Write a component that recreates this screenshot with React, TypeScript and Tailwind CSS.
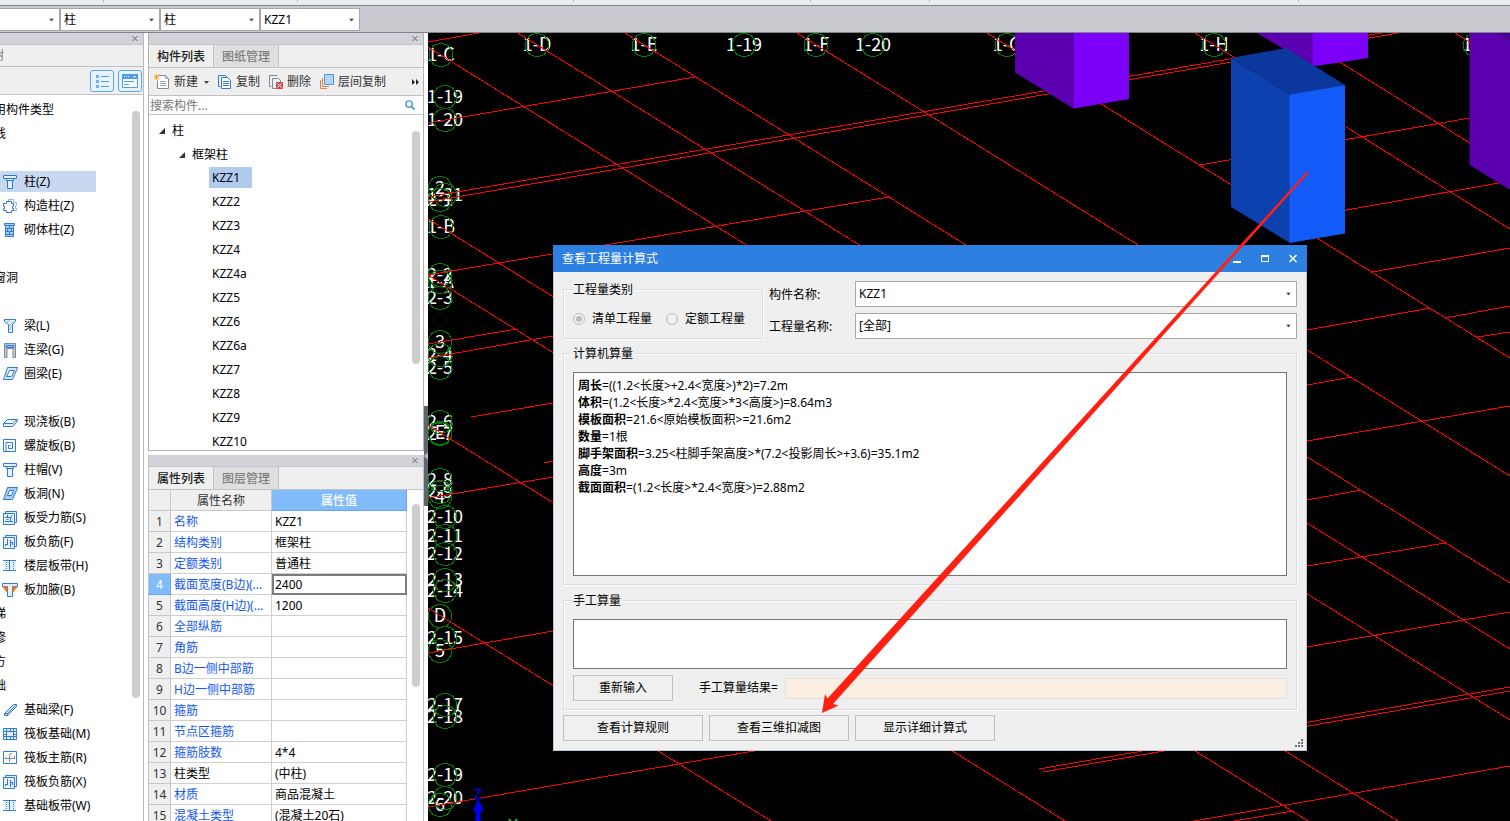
import React from 'react';

const FONT = "font-['Noto_Sans','Noto_Sans_CJK_SC',sans-serif]";

type IconProps = { children: React.ReactNode; className?: string };

const Icon = ({ children, className = '' }: IconProps) => (
  <svg
    viewBox="0 0 16 16"
    className={`h-4 w-4 shrink-0 ${className}`}
    fill="none"
    stroke="#2f7bd6"
    aria-hidden="true"
  >
    {children}
  </svg>
);

const rebarFrame = <path d="M1.5 3.5h11v11h-11zM3.500 3.500v-2h11v11h-2" fill="#e3effc" />;

const icons: Record<string, React.ReactNode> = {
  column: <path d="M1.5 1.5h13v3h-13zM4.5 4.5v2h7v-2M5.5 6.5v8h5v-8" fill="#e3effc" />,
  structColumn: (
    <>
      <path d="M6.500 3V1.500h5v3h3v3h-1v3h1v2h-3" stroke="#8db8ea" />
      <path d="M4.5 3.5h5v2h2v3h-1v2h1v2h-2v2h-5v-2h-3v-2h1v-2h-1v-3h3z" fill="#fff" />
    </>
  ),
  brickColumn: (
    <>
      <path d="M2.5 1.5h10v2h-10zM3.5 3.5h8v11h-8z" fill="#a9cdf5" />
      <path d="M4 6.500h7M4 9.500h7M4 12.500h7M7.500 4v2M5.500 7v2M9.500 7v2M7.500 10v2" />
    </>
  ),
  beam: (
    <>
      <path d="M2.5 1.5h11v2l-3 3v8h-4v-8l-4-3z" fill="#e3effc" />
      <path d="M4 5l4-3M7 8l5-5M7 12l3-4" stroke="#8db8ea" />
    </>
  ),
  linkBeam: (
    <>
      <path d="M2.500 15.500V1.500h11v14h-2.500V6.500H5v9z" fill="#c4c9ce" stroke="#7e8a96" />
      <path d="M4 3.500h8v2H4z" fill="#8dbcf0" />
    </>
  ),
  ringBeam: (
    <path
      d="M5.500 1.500h10l-1 3-4 9h-9l1-3zM7.500 4.500h5l-3 6h-5z"
      fill="#d3e6fb"
      fillRule="evenodd"
    />
  ),
  slab: <path d="M1.500 9.500l4-4h10l-1 3-4 4h-9zM1.500 9.500h9.500l4-4" fill="#e3effc" />,
  spiral: <path d="M4 13.500h9.500v-12H1.500v12H4v-9h6.500v6h-4v-3h2" />,
  opening: (
    <>
      <path d="M5.500 1.500h10l-1 3-4 9h-9l1-3z" fill="#a9cdf5" />
      <path d="M7.500 4.500h4l-2 5h-4z" fill="#fff" />
    </>
  ),
  rebar: (
    <>
      {rebarFrame}
      <path d="M3 7.500h6l1-2M3 11.500h8M5.500 5v2M8.500 7v5M4.500 9.500h2" />
    </>
  ),
  negRebar: (
    <>
      {rebarFrame}
      <path d="M5.500 5v6M8.500 6v7M3 10.500h3M8 8.500h3M3.500 10v2M10.500 8v3" />
    </>
  ),
  strip: (
    <>
      <path d="M2 3h12v10H2z" fill="#e3effc" stroke="none" />
      <path d="M1 2.500h13M1 12.500h13M7.500 2v11" />
      <path d="M4.500 4v9M11.500 4v9" strokeDasharray="1 1" />
    </>
  ),
  haunch: (
    <>
      <path d="M.500 1.500h15v3h-5v10h-5v-10h-5z" fill="#e3effc" />
      <path d="M1 5h4v5zM15 5h-4v5z" fill="#f07818" stroke="#f07818" />
    </>
  ),
  foundBeam: <path d="M2.500 11.500l9-9h3v2l-9 9h-3zM2.500 11.500h3v2M5.500 11.500l8-8" fill="#d3e6fb" />,
  raft: (
    <>
      <path d="M1.500 2.500h13v11h-13z" fill="#e3effc" />
      <path d="M4.500 2v12M11.500 2v12M2 5.500h12M2 10.500h12M8.500 2v3M8.500 11v3M2 8.500h2M12 8.500h2" />
    </>
  ),
  raftMain: (
    <>
      <path d="M1.500 1.500h13v12h-13z" fill="#fff" />
      <path d="M3 8.500h10M7.500 12V5.500q0-2 2.500-2M3.500 7v2M12.500 6v2.500" stroke="#7e8a96" />
    </>
  ),
};

// Rows of the module tree, one entry per 24px line. Entries without an icon are group headings.
const moduleRows: { text: string; icon?: string }[] = [
  { text: '用构件类型' },
  { text: '线' },
  { text: '' },
  { text: '柱(Z)', icon: 'column' },
  { text: '构造柱(Z)', icon: 'structColumn' },
  { text: '砌体柱(Z)', icon: 'brickColumn' },
  { text: '' },
  { text: '窗洞' },
  { text: '' },
  { text: '梁(L)', icon: 'beam' },
  { text: '连梁(G)', icon: 'linkBeam' },
  { text: '圈梁(E)', icon: 'ringBeam' },
  { text: '' },
  { text: '现浇板(B)', icon: 'slab' },
  { text: '螺旋板(B)', icon: 'spiral' },
  { text: '柱帽(V)', icon: 'column' },
  { text: '板洞(N)', icon: 'opening' },
  { text: '板受力筋(S)', icon: 'rebar' },
  { text: '板负筋(F)', icon: 'negRebar' },
  { text: '楼层板带(H)', icon: 'strip' },
  { text: '板加腋(B)', icon: 'haunch' },
  { text: '梯' },
  { text: '修' },
  { text: '方' },
  { text: '础' },
  { text: '基础梁(F)', icon: 'foundBeam' },
  { text: '筏板基础(M)', icon: 'raft' },
  { text: '筏板主筋(R)', icon: 'raftMain' },
  { text: '筏板负筋(X)', icon: 'negRebar' },
  { text: '基础板带(W)', icon: 'strip' },
];

const components = ['KZZ1', 'KZZ2', 'KZZ3', 'KZZ4', 'KZZ4a', 'KZZ5', 'KZZ6', 'KZZ6a', 'KZZ7', 'KZZ8', 'KZZ9', 'KZZ10'];

const properties: [string, string][] = [
  ['名称', 'KZZ1'],
  ['结构类别', '框架柱'],
  ['定额类别', '普通柱'],
  ['截面宽度(B边)(...', '2400'],
  ['截面高度(H边)(...', '1200'],
  ['全部纵筋', ''],
  ['角筋', ''],
  ['B边一侧中部筋', ''],
  ['H边一侧中部筋', ''],
  ['箍筋', ''],
  ['节点区箍筋', ''],
  ['箍筋肢数', '4*4'],
  ['柱类型', '(中柱)'],
  ['材质', '商品混凝土'],
  ['混凝土类型', '(混凝土20石)'],
];

const formulas: [string, string][] = [
  ['周长', '=((1.2<长度>+2.4<宽度>)*2)=7.2m'],
  ['体积', '=(1.2<长度>*2.4<宽度>*3<高度>)=8.64m3'],
  ['模板面积', '=21.6<原始模板面积>=21.6m2'],
  ['数量', '=1根'],
  ['脚手架面积', '=3.25<柱脚手架高度>*(7.2<投影周长>+3.6)=35.1m2'],
  ['高度', '=3m'],
  ['截面面积', '=(1.2<长度>*2.4<宽度>)=2.88m2'],
];

// Grid axes of the model view: x1, y1, x2, y2
const axes = [
  [428, 47, 1510, 720],
  [518, 33, 1510, 649],
  [625, 33, 1510, 583],
  [797, 33, 1510, 476],
  [987, 33, 1510, 358],
  [1195, 33, 1510, 229],
  [1293, 33, 1510, 168],
  [1455, 33, 1510, 67],
  [428, 219, 1398, 821],
  [428, 275, 1308, 821],
  [428, 425, 1065, 821],
  [428, 608, 771, 821],
  [428, 42, 479, 33],
  [428, 123, 695, 77],
  [428, 197, 1381, 33],
  [428, 202, 1398, 33],
  [428, 275, 889, 197],
  [428, 344, 517, 329],
  [428, 358, 553, 336],
  [471, 417, 553, 403],
  [544, 463, 553, 461],
  [428, 498, 553, 477],
  [428, 653, 553, 631],
  [428, 807, 754, 751],
  [1200, 165, 1470, 118],
  [1307, 217, 1499, 183],
  [1372, 272, 1510, 248],
  [1307, 330, 1431, 308],
  [1445, 318, 1510, 306],
  [1477, 337, 1510, 332],
  [1307, 385, 1352, 377],
  [1307, 441, 1510, 406],
  [1307, 500, 1361, 490],
  [1307, 566, 1445, 543],
  [1307, 647, 1510, 612],
  [1039, 769, 1510, 687],
  [1043, 772, 1510, 691],
  [1194, 821, 1510, 766],
  [1234, 821, 1293, 811],
];

const marks: [string, number, number][] = [
  ['1-C', 441, 55],
  ['1-D', 537, 45],
  ['1-E', 644, 45],
  ['1-19', 744, 45],
  ['1-F', 816, 45],
  ['1-20', 873, 45],
  ['1-G', 1007, 45],
  ['1-H', 1214, 45],
  ['1-J', 1475, 45],
  ['1-19', 445, 97],
  ['1-20', 445, 120],
  ['2', 440, 188],
  ['1-21', 445, 195],
  ['2-1', 440, 200],
  ['1-B', 441, 227],
  ['2-2', 440, 275],
  ['1-A', 440, 282],
  ['2-3', 440, 298],
  ['3', 440, 342],
  ['2-4', 440, 355],
  ['2-5', 440, 368],
  ['2-6', 440, 422],
  ['E', 440, 433],
  ['2-7', 440, 434],
  ['2-8', 440, 480],
  ['2-9', 440, 492],
  ['4', 440, 497],
  ['2-10', 445, 517],
  ['2-11', 445, 536],
  ['2-12', 445, 554],
  ['2-13', 445, 580],
  ['2-14', 445, 591],
  ['D', 440, 616],
  ['2-15', 445, 638],
  ['5', 440, 651],
  ['2-17', 445, 705],
  ['2-18', 445, 717],
  ['2-19', 445, 775],
  ['2-20', 445, 798],
  ['6', 440, 805],
];

const bubble = (cx: number, cy: number) =>
  Array.from({ length: 10 }, (_, i) => {
    const a = (i * Math.PI) / 5 - Math.PI / 2;
    return `${cx + 12 * Math.cos(a)},${cy + 12 * Math.sin(a)}`;
  }).join(' ');

function Scene() {
  return (
    <svg
      viewBox="428 33 1082 788"
      preserveAspectRatio="xMinYMin slice"
      className="absolute inset-0 h-full w-full"
      role="img"
      aria-label="三维模型"
    >
      <g fill="#fff" fontSize="18" textAnchor="middle" className="font-['Noto_Sans_CJK_SC',sans-serif]">
        {marks.map(([text, x, y]) => (
          <text key={`${text}-${y}-${x}`} x={x} y={y + 6}>
            {text}
          </text>
        ))}
      </g>
      <g fill="none" stroke="#008000" shapeRendering="crispEdges">
        {marks.map(([text, x, y]) => (
          <polygon key={`${text}-${y}-${x}`} points={bubble(x, y)} />
        ))}
      </g>
      <g stroke="#f00" shapeRendering="crispEdges">
        {axes.map(([x1, y1, x2, y2]) => (
          <line key={`${x1}-${y1}-${y2}`} x1={x1} y1={y1} x2={x2} y2={y2} />
        ))}
      </g>
      <path d="M1015 33v39.500L1074 109V33z" fill="#5a00b0" />
      <path d="M1074 33h55v66l-55 9.500z" fill="#7c00f8" />
      <path d="M1257 33l56 33.500V33z" fill="#5a00b0" />
      <path d="M1312.500 33H1368v25l-55.500 8.500z" fill="#7c00f8" />
      <path d="M1469.500 33v132l41 25V33z" fill="#5a00b0" />
      <path d="M1498 33h13v9z" fill="#4a0094" />
      <path d="M1231 58l55-10 59 37-55 9.500z" fill="#0c389e" />
      <path d="M1231 58l59 36.500V243l-59-36z" fill="#0e41b0" />
      <path d="M1289.500 94.500L1345 85v148.500l-55.500 9.500z" fill="#135bf8" />
      <text x="478" y="799" fontSize="15" textAnchor="middle" fill="#00f">
        Z
      </text>
      <path d="M478 799l6 12h-3.500v10h-5v-10H473z" fill="#00f" />
      <text x="513" y="831" fontSize="16" textAnchor="middle" fill="#0f0">
        Y
      </text>
    </svg>
  );
}

const Caret = ({ className = '' }: { className?: string }) => (
  <svg viewBox="0 0 5 3" className={`h-[3px] w-[5px] shrink-0 ${className}`} aria-hidden="true">
    <path d="M0 0h5L2.500 3z" fill="#444" />
  </svg>
);

type SelectProps = { value: string; label?: string; id?: string; className?: string };

function Select({ value, label, id, className = '' }: SelectProps) {
  return (
    <div className={`relative ${className}`}>
      <select
        id={id}
        aria-label={label}
        className="h-full w-full appearance-none border border-[#a8a8a8] bg-white pl-[3px] text-black"
      >
        <option>{value}</option>
      </select>
      <Caret className="pointer-events-none absolute top-1/2 right-1.5 -translate-y-1/2" />
    </div>
  );
}

const PanelStrip = () => (
  <div className="flex h-3 shrink-0 items-center justify-end border-b border-[#c3c5cc] bg-[#d2d3d9] pr-[5px]">
    <button type="button" aria-label="关闭">
      <svg viewBox="0 0 6 5" className="h-[5px] w-[6px]" stroke="#6a6a6a" aria-hidden="true">
        <path d="M.500 0l5 5M5.500 0l-5 5" />
      </svg>
    </button>
  </div>
);

function Tabs({ items }: { items: string[] }) {
  return (
    <div className="flex h-[23px] shrink-0 border-b border-[#c0c2c9] bg-[#efefef]" role="tablist">
      {items.map((item, i) => (
        <button
          key={item}
          type="button"
          role="tab"
          aria-selected={i === 0}
          className={`h-[22px] border-r border-[#c0c2c9] px-2 pt-0.5 font-medium ${
            i === 0 ? 'text-[#222]' : 'bg-[#dfdfdf] text-[#808080]'
          }`}
        >
          {item}
        </button>
      ))}
    </div>
  );
}

function ModulePanel() {
  return (
    <aside className="flex w-36 shrink-0 flex-col overflow-hidden border-r border-[#b8babf] bg-white">
      <PanelStrip />
      <div className="flex h-[22px] shrink-0 items-center border-b border-[#c0c2c9] bg-[#efefef] text-[#777]">
        <span className="-ml-2">树</span>
      </div>
      <div className="flex h-7 shrink-0 items-center justify-end gap-1 border-b border-[#c0c2c9] bg-[#efefef] pr-px">
        <button
          type="button"
          aria-label="列表"
          className="flex h-[22px] w-6 items-center justify-center rounded-[3px] border border-[#5aa5f2] bg-[#eaf4ff]"
        >
          <Icon>
            <path d="M2.500 2.500h2v2h-2zM2.500 7.500h2v2h-2zM2.500 12.500h2v2h-2z" stroke="#4a9cf0" />
            <path d="M7 3.500h8M7 8.500h8M7 13.500h8" stroke="#4a9cf0" />
          </Icon>
        </button>
        <button
          type="button"
          aria-label="卡片"
          className="flex h-[22px] w-6 items-center justify-center rounded-[3px] border border-[#5aa5f2] bg-[#eaf4ff]"
        >
          <Icon>
            <path d="M.500 1.500h15v13h-15z" fill="#fff" stroke="#4a9cf0" />
            <path d="M0 1h16v5H0z" fill="#4a9cf0" stroke="none" />
            <path d="M2 3.500h6" stroke="#fff" strokeDasharray="1 1" />
            <path d="M11 3h3l-1.500 2z" fill="#fff" stroke="none" />
            <path d="M2 8.500h10M2 11.500h5" stroke="#4a9cf0" />
          </Icon>
        </button>
      </div>
      <div className="relative min-h-0 flex-1 overflow-hidden pt-[3px]">
        <ul>
          {moduleRows.map(({ text, icon }, i) => (
            <li key={i} className="flex h-6 items-start pt-px leading-[21px] whitespace-nowrap">
              {icon ? (
                <button
                  type="button"
                  className={`flex h-[21px] items-center gap-1.5 pl-0.5 ${
                    i === 3 ? 'w-24 bg-[#c8d8f0]' : ''
                  }`}
                >
                  <Icon>{icons[icon]}</Icon>
                  {text}
                </button>
              ) : (
                <span className="-ml-1.5">{text}</span>
              )}
            </li>
          ))}
        </ul>
        <div className="absolute top-4 right-[3px] h-[587px] w-2 rounded-full bg-[#cdcdcd]" />
      </div>
    </aside>
  );
}

const Toolbar = () => (
  <div className="flex h-7 shrink-0 items-center border-b border-[#c0c2c9] bg-[#efefef] pt-px pr-[3px] pl-[5px] text-[#333]">
    <button type="button" className="flex items-center gap-1">
      <Icon>
        <path d="M5 1.500h6.500l3 3v10h-11v-8" fill="#fff" stroke="#7e8a96" />
        <path d="M11.500 1.500v3h3M6 7.500h6M6 9.500h6M6 11.500h6" stroke="#9aa4ae" />
        <path d="M0 .500l5 5M5 .500l-5 5M2.500 0v6M0 3h5" stroke="#f5a020" />
      </Icon>
      新建
      <Caret className="ml-0.5" />
    </button>
    <button type="button" className="ml-2 flex items-center gap-[3px]">
      <Icon>
        <path d="M3.500 12.500h-2v-11h7l2 2" />
        <path d="M4.500 3.500h6l3 3v8h-9z" fill="#fff" />
        <path d="M6 7.500h6M6 9.500h6M6 11.500h6" />
      </Icon>
      复制
    </button>
    <button type="button" className="ml-2 flex items-center gap-[3px]">
      <Icon>
        <path d="M3.500 12.500h-2v-11h8M8 14.500H4.500v-10h6l2 2V8" stroke="#7e8a96" />
        <path d="M8 8h7v7H8z" fill="#d84a4a" stroke="none" />
        <path d="M9.500 9.500l4 4M13.500 9.500l-4 4" stroke="#fff" />
      </Icon>
      删除
    </button>
    <button type="button" className="ml-2 flex items-center gap-[3px]">
      <Icon>
        <path d="M1.500 6v8.500H8M3.500 4v8.500H10" stroke="#f08030" />
        <path d="M5.500.500h9v10h-9z" fill="#b5d5fa" stroke="#4a94e8" />
      </Icon>
      层间复制
    </button>
    <button type="button" aria-label="更多" className="ml-auto">
      <svg viewBox="0 0 8 6" className="h-1.5 w-2" fill="#222" aria-hidden="true">
        <path d="M0 0l3 3-3 3zM4 0l3 3-3 3z" />
      </svg>
    </button>
  </div>
);

const Expander = () => (
  <svg viewBox="0 0 6 6" className="h-1.5 w-1.5" aria-hidden="true">
    <path d="M6 0v6H0z" fill="#333" />
  </svg>
);

function ComponentPanel() {
  return (
    <section className="flex h-[418px] shrink-0 flex-col border border-t-0 border-[#b0b2b8] bg-white">
      <PanelStrip />
      <Tabs items={['构件列表', '图纸管理']} />
      <Toolbar />
      <div className="flex h-[19px] shrink-0 items-center border-b border-[#c0c2c9] pr-2 pl-px">
        <input
          aria-label="搜索构件"
          placeholder="搜索构件..."
          className="min-w-0 flex-1 pt-px outline-none placeholder:text-[#777]"
        />
        <svg viewBox="0 0 11 11" className="h-[10px] w-[10px]" fill="none" stroke="#3f97d0" aria-hidden="true">
          <circle cx="4.500" cy="4.500" r="3.500" strokeWidth="1.500" />
          <path d="M7 7l3.500 3.500" strokeWidth="2" />
        </svg>
      </div>
      <div className="relative min-h-0 flex-1 overflow-hidden pt-[3px]">
        <div className="flex h-6 items-center gap-[7px] pt-px pl-[10px]">
          <Expander />柱
        </div>
        <div className="flex h-6 items-center gap-[7px] pt-px pl-[30px]">
          <Expander />
          框架柱
        </div>
        <ul className="pl-[60px]">
          {components.map((name, i) => (
            <li key={name} className="flex h-6 items-start pt-px">
              <span className={`h-[21px] px-[3px] leading-[21px] ${i === 0 ? 'w-[43px] bg-[#b0cbee]' : ''}`}>
                {name}
              </span>
            </li>
          ))}
        </ul>
        <div className="absolute top-4 right-[3px] h-[233px] w-2 rounded-full bg-[#cdcdcd]" />
      </div>
    </section>
  );
}

function PropertyPanel() {
  return (
    <section className="mt-1 flex min-h-0 flex-1 flex-col border border-t-0 border-b-0 border-[#c0c2c9] bg-white">
      <PanelStrip />
      <Tabs items={['属性列表', '图层管理']} />
      <div className="relative min-h-0 flex-1 overflow-hidden">
        <table className="w-[258px] table-fixed border-separate border-spacing-0">
          <colgroup>
            <col className="w-[22px]" />
            <col className="w-[101px]" />
            <col />
          </colgroup>
          <thead>
            <tr className="h-[21px] bg-[#efefef] text-[#333]">
              <th className="border-r border-b border-[#c8c8c8] p-0" aria-label="序号" />
              <th className="border-r border-b border-[#c8c8c8] p-0 pt-0.5 font-normal">属性名称</th>
              <th className="border-r border-b border-[#62a8ee] bg-[#82bbfa] p-0 pt-0.5 font-medium text-white">
                属性值
              </th>
            </tr>
          </thead>
          <tbody>
            {properties.map(([name, value], i) => (
              <tr key={name} className="h-[21px]">
                <td
                  className={`border-r border-b p-0 pt-0.5 text-center ${
                    i === 3
                      ? 'border-[#62a8ee] bg-[#82bbfa] text-white'
                      : 'border-[#c8c8c8] bg-[#efefef] text-[#333]'
                  }`}
                >
                  {i + 1}
                </td>
                <td
                  className={`overflow-hidden border-r border-b border-[#d0d0d0] p-0 pt-0.5 pl-[3px] whitespace-nowrap ${
                    name === '柱类型' ? 'text-black' : 'text-[#1458f0]'
                  }`}
                >
                  {name}
                </td>
                <td
                  className={`border-r border-b border-[#d0d0d0] p-0 pt-0.5 pl-[3px] ${
                    i === 3 ? 'outline-2 -outline-offset-2 outline-[#7c7c7c]' : ''
                  }`}
                >
                  {value}
                </td>
              </tr>
            ))}
          </tbody>
        </table>
        <div className="absolute top-3.5 right-[3px] h-[183px] w-2 rounded-full bg-[#cdcdcd]" />
      </div>
    </section>
  );
}

const groupClass =
  'min-w-0 border border-[#dcdcdc] px-[9px] shadow-[1px_1px_0_#fff,inset_1px_1px_0_#fff]';
const legendClass = 'bg-[#efefef] pt-0.5 pr-0.5 leading-[14px]';
const buttonClass = 'border border-[#c0c0c0] bg-[#f0f0f0] h-[26px] text-black';

function QuantityDialog() {
  return (
    <div
      role="dialog"
      aria-label="查看工程量计算式"
      className="absolute top-[212px] left-[125px] flex w-[754px] flex-col bg-[#efefef] text-black"
    >
      <header className="flex h-[27px] items-center bg-[#2d80e2] px-[9px] text-white">
        <h1 className="flex-1">查看工程量计算式</h1>
        <div className="flex items-center gap-[19px]">
          <button type="button" aria-label="最小化">
            <svg viewBox="0 0 9 9" className="h-[9px] w-[9px]" aria-hidden="true">
              <path d="M0 7h8v2H0z" fill="#fff" />
            </svg>
          </button>
          <button type="button" aria-label="最大化">
            <svg viewBox="0 0 9 9" className="h-[9px] w-[9px]" aria-hidden="true">
              <path d="M0 1h8v7H0zM1 3v4h6V3z" fill="#fff" fillRule="evenodd" />
            </svg>
          </button>
          <button type="button" aria-label="关闭窗口">
            <svg viewBox="0 0 9 9" className="h-[9px] w-[9px]" stroke="#fff" strokeWidth="1.500" aria-hidden="true">
              <path d="M.500 1l7 7M7.500 1l-7 7" />
            </svg>
          </button>
        </div>
      </header>

      <div className="flex flex-col border border-t-0 border-[#b9c7d6] p-[9px]">
        <div className="flex gap-1.5">
          <fieldset className={`h-[58px] w-[200px] ${groupClass}`}>
            <legend className={legendClass}>工程量类别</legend>
            <div className="flex gap-3.5 pt-3.5 leading-4">
              {['清单工程量', '定额工程量'].map((name, i) => (
                <label key={name} className="flex items-center gap-[7px]">
                  <input
                    type="radio"
                    name="quantity"
                    defaultChecked={i === 0}
                    className="h-3 w-3 appearance-none rounded-full border border-[#bcbcbc] bg-[#f2f2f2] bg-clip-content p-0.5 checked:bg-[#bcbcbc]"
                  />
                  {name}
                </label>
              ))}
            </div>
          </fieldset>
          <div className="grid flex-1 grid-cols-[80px_1fr] items-center gap-x-1.5 gap-y-1.5">
            <label htmlFor="component-name" className="pt-0.5">
              构件名称:
            </label>
            <Select id="component-name" value="KZZ1" className="h-[26px]" />
            <label htmlFor="quantity-name" className="pt-0.5">
              工程量名称:
            </label>
            <Select id="quantity-name" value="[全部]" className="h-[26px]" />
          </div>
        </div>

        <fieldset className={`mt-1.5 pb-2 ${groupClass}`}>
          <legend className={legendClass}>计算机算量</legend>
          <div className="mt-[11px] h-[204px] border border-[#767676] bg-white p-1 leading-[17px]">
            {formulas.map(([name, text]) => (
              <p key={name}>
                <b>{name}</b>
                {text}
              </p>
            ))}
          </div>
        </fieldset>

        <fieldset className={`mt-[7px] pb-2 ${groupClass}`}>
          <legend className={legendClass}>手工算量</legend>
          <textarea
            aria-label="手工算量"
            className="mt-[11px] block h-[50px] w-full resize-none border border-[#767676] bg-white"
          />
          <div className="mt-1.5 flex items-center">
            <button type="button" className={`w-[100px] ${buttonClass}`}>
              重新输入
            </button>
            <label htmlFor="manual-result" className="ml-[26px]">
              手工算量结果=
            </label>
            <input
              id="manual-result"
              readOnly
              className="ml-[7px] h-[21px] min-w-0 flex-1 border border-[#e0e0e0] bg-[#faeee3]"
            />
          </div>
        </fieldset>

        <div className="mt-[5px] flex gap-1.5">
          {['查看计算规则', '查看三维扣减图', '显示详细计算式'].map((name) => (
            <button key={name} type="button" className={`w-[140px] ${buttonClass}`}>
              {name}
            </button>
          ))}
        </div>
      </div>
      <svg viewBox="0 0 8 8" className="absolute right-1 bottom-1 h-2 w-2" fill="#6e7378" aria-hidden="true">
        <path d="M6 0h2v2H6zM3 3h2v2H3zM6 3h2v2H6zM0 6h2v2H0zM3 6h2v2H3zM6 6h2v2H6z" />
      </svg>
    </div>
  );
}

export default function App() {
  return (
    <div className={`flex h-screen flex-col overflow-hidden bg-white text-xs text-black ${FONT}`}>
      <div className="flex h-[5px] shrink-0 bg-[#e8eded]">
        <div className="h-0.5 w-[104px] border-r border-[#b0b4b8]" />
        <div className="h-0.5 w-[194px] border-r border-[#b0b4b8]" />
        <div className="h-0.5 w-[276px] border-r border-[#b0b4b8]" />
        <div className="h-0.5 w-[237px] border-r border-[#b0b4b8]" />
        <div className="h-0.5 w-[119px] border-r border-[#b0b4b8]" />
        <div className="h-0.5 w-[369px] border-r border-[#b0b4b8]" />
      </div>
      <div className="flex h-7 shrink-0 border-t border-b border-[#80858c] bg-[#c9cbd0] pt-0.5">
        <Select value="" label="楼层" className="-ml-10 h-[23px] w-[100px]" />
        <Select value="柱" label="构件大类" className="h-[23px] w-[100px]" />
        <Select value="柱" label="构件类型" className="h-[23px] w-[100px]" />
        <Select value="KZZ1" label="构件" className="h-[23px] w-[100px]" />
      </div>
      <div className="flex min-h-0 flex-1">
        <ModulePanel />
        <div className="relative ml-1 flex w-[280px] shrink-0 flex-col pr-1">
          <ComponentPanel />
          <PropertyPanel />
          <button
            type="button"
            aria-label="收起面板"
            className="absolute top-[373px] right-0 flex h-[100px] w-1 items-center bg-[#5f6670]"
          >
            <svg viewBox="0 0 4 8" className="h-2 w-1" aria-hidden="true">
              <path d="M4 0v8L0 4z" fill="#b8bcc4" />
            </svg>
          </button>
        </div>
        <main className="relative min-w-0 flex-1 overflow-hidden bg-black">
          <Scene />
          <QuantityDialog />
          <svg
            viewBox="428 33 1082 788"
            preserveAspectRatio="xMinYMin slice"
            className="pointer-events-none absolute inset-0 h-full w-full"
            aria-hidden="true"
          >
            <path d="M1307 171.500l1.500 1.500L833 704l5.500 1.500L822 713l3-19 2.500 4.500z" fill="#ff2012" />
          </svg>
        </main>
      </div>
    </div>
  );
}
